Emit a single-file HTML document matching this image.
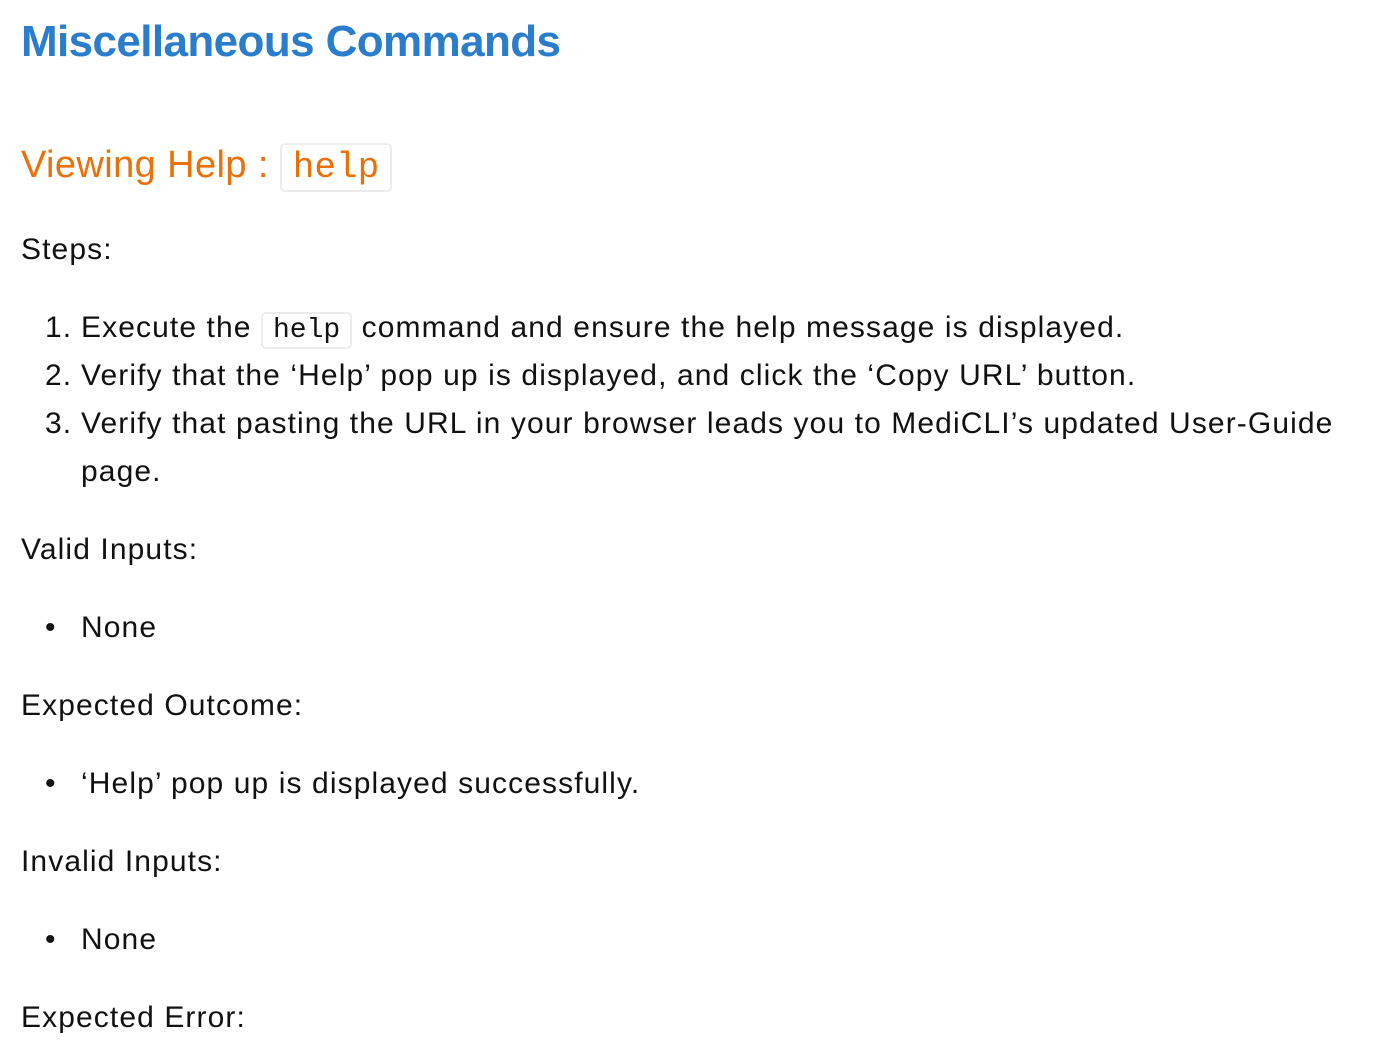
<!DOCTYPE html>
<html><head><meta charset="utf-8"><style>
body{margin:0;background:#fff;width:1377px;height:1044px;overflow:hidden;font-family:"Liberation Sans",sans-serif;color:#111;}
.l{position:absolute;white-space:nowrap;font-size:30px;line-height:40px;letter-spacing:1.1px;}
code{font-family:"Liberation Mono",monospace;border:2px solid #ececec;border-radius:5px;padding:1px 10px;font-size:28px;letter-spacing:0;}
h1{position:absolute;left:21px;top:14px;margin:0;font-size:44px;line-height:56px;color:#2a7ccc;font-weight:bold;letter-spacing:-0.6px;}
h2{position:absolute;left:21px;top:140px;margin:0;font-size:38px;line-height:50px;color:#e8710a;font-weight:normal;letter-spacing:0.4px;}
h2 code{font-size:36px;padding:2px 11px;color:#e8710a;}
</style></head><body>
<h1>Miscellaneous Commands</h1>
<h2>Viewing Help : <code>help</code></h2>
<div class="l" style="left:21px;top:230px">Steps:</div>
<div class="l" style="left:45px;top:308px">1.</div><div class="l" style="left:81px;top:308px">Execute the <code>help</code> command and ensure the help message is displayed.</div>
<div class="l" style="left:45px;top:356px">2.</div><div class="l" style="left:81px;top:356px">Verify that the ‘Help’ pop up is displayed, and click the ‘Copy URL’ button.</div>
<div class="l" style="left:45px;top:404px">3.</div><div class="l" style="left:81px;top:404px">Verify that pasting the URL in your browser leads you to MediCLI’s updated User-Guide</div>
<div class="l" style="left:81px;top:452px">page.</div>
<div class="l" style="left:21px;top:530px">Valid Inputs:</div>
<div class="l" style="left:45px;top:608px">•</div><div class="l" style="left:81px;top:608px">None</div>
<div class="l" style="left:21px;top:686px">Expected Outcome:</div>
<div class="l" style="left:45px;top:764px">•</div><div class="l" style="left:81px;top:764px">‘Help’ pop up is displayed successfully.</div>
<div class="l" style="left:21px;top:842px">Invalid Inputs:</div>
<div class="l" style="left:45px;top:920px">•</div><div class="l" style="left:81px;top:920px">None</div>
<div class="l" style="left:21px;top:998px">Expected Error:</div>
</body></html>
